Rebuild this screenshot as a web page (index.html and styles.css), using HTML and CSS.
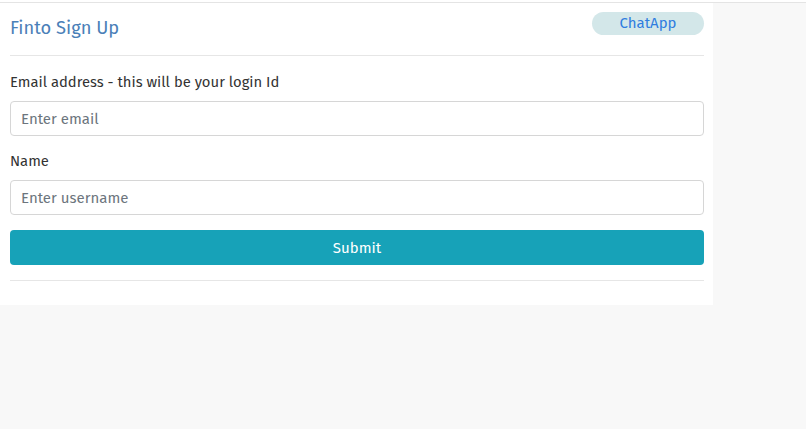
FILE: index.html
```html
<!DOCTYPE html>
<html>
<head>
<meta charset="utf-8">
<link rel="stylesheet" href="styles.css">
</head>
<body>
<div class="topline"></div>
<div class="card">
  <div class="header">
    <h1 class="title">Finto Sign Up</h1>
    <span class="badge">ChatApp</span>
  </div>
  <hr class="rule">
  <form class="form">
    <label class="label">Email address - this will be your login Id</label>
    <input class="input" type="text" placeholder="Enter email">
    <label class="label">Name</label>
    <input class="input" type="text" placeholder="Enter username">
    <button class="submit" type="button">Submit</button>
  </form>
  <hr class="rule bottom">
</div>
</body>
</html>
```

FILE: styles.css
```css
* { box-sizing: border-box; }
html, body { margin: 0; padding: 0; }
body {
  background: #f8f8f8;
  font-family: "Fira Sans", "Open Sans", "Noto Sans", sans-serif;
  font-size: 14.8px;
  color: #333;
}
.topline {
  height: 3px;
  background: #fff;
  border-bottom: 1px solid #e4e4e4;
}
.card {
  width: 713px;
  background: #fff;
  padding: 9px 9px 24px 10px;
}
.header {
  display: flex;
  justify-content: space-between;
  align-items: flex-start;
  height: 43px;
}
.title {
  margin: 4px 0 0 0;
  font-size: 18.3px;
  font-weight: 400;
  line-height: 24px;
  color: #4a80b8;
}
.badge {
  width: 112px;
  height: 23px;
  line-height: 22px;
  border-radius: 12px;
  background: #d3e7e9;
  color: #2f7de0;
  text-align: center;
  font-size: 15px;
}
.rule {
  margin: 0;
  border: 0;
  border-top: 1px solid #e6e6e6;
}
.form {
  display: flex;
  flex-direction: column;
  padding-top: 16px;
}
.label {
  display: block;
  line-height: 20px;
  margin-bottom: 9px;
}
.input {
  height: 35px;
  border: 1px solid #d6d6d6;
  border-radius: 4px;
  padding: 0 10px;
  font-family: inherit;
  font-size: 15px;
  color: #333;
  margin-bottom: 15px;
}
.input::placeholder { color: #6c757d; }
.submit {
  height: 35px;
  border: 0;
  border-radius: 4px;
  background: #17a2b8;
  color: #fff;
  font-family: inherit;
  font-size: 15px;
  font-weight: 400;
  margin-bottom: 15px;
}
```
